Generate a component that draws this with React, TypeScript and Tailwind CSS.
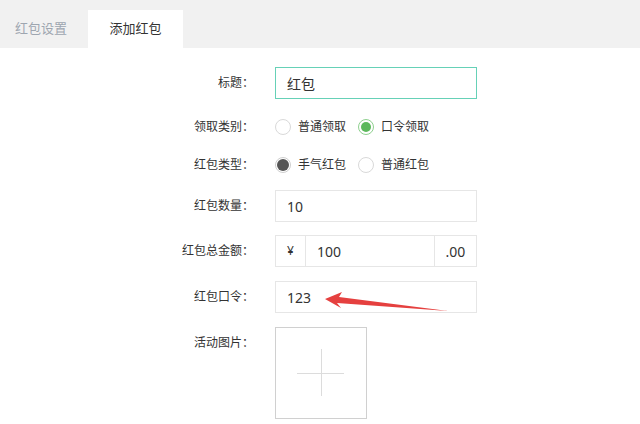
import React from "react";

const font = { fontFamily: '"Noto Sans", "Noto Sans CJK SC", sans-serif' };

function Label({ children }: { children: React.ReactNode }) {
  return (
    <div className="w-[254px] shrink-0 text-right text-[12px] text-[#333] leading-[32px]">
      {children}
    </div>
  );
}

function Radio({ state }: { state: "off" | "green" | "dark" }) {
  if (state === "green") {
    return (
      <span className="w-4 h-4 rounded-full border border-[#8fd08f] bg-white flex items-center justify-center">
        <span className="w-[10px] h-[10px] rounded-full bg-[#5cb85c]" />
      </span>
    );
  }
  if (state === "dark") {
    return (
      <span className="w-4 h-4 rounded-full border border-[#cfcfcf] bg-white flex items-center justify-center">
        <span className="w-[12px] h-[12px] rounded-full bg-[#555]" />
      </span>
    );
  }
  return <span className="w-4 h-4 rounded-full border border-[#d9d9d9] bg-white" />;
}

function RadioItem({ state, text }: { state: "off" | "green" | "dark"; text: string }) {
  return (
    <div className="flex items-center">
      <Radio state={state} />
      <span className="ml-[7px] text-[12px] text-[#333]">{text}</span>
    </div>
  );
}

export default function App() {
  return (
    <div className="w-[640px] h-[424px] bg-white overflow-hidden" style={font}>
      <div className="h-[48px] bg-[#f1f1f1] flex items-end">
        <div className="w-[88px] h-[38px] flex items-center pl-[15px] text-[13px] text-[#9ea6b0]">
          红包设置
        </div>
        <div className="w-[95px] h-[38px] bg-white flex items-center justify-center text-[13px] text-[#333]">
          添加红包
        </div>
      </div>

      <div className="flex flex-col">
        <div className="flex items-center mt-[19px] h-[32px]">
          <Label>标题：</Label>
          <div className="ml-[21px] w-[202px] h-[32px] border border-[#66d1b7] flex items-center pl-[11px] text-[14px] text-[#333]">
            红包
          </div>
        </div>

        <div className="flex items-center mt-[12px] h-[32px]">
          <Label>领取类别：</Label>
          <div className="ml-[21px] flex items-center gap-[12px]">
            <RadioItem state="off" text="普通领取" />
            <RadioItem state="green" text="口令领取" />
          </div>
        </div>

        <div className="flex items-center mt-[6px] h-[32px]">
          <Label>红包类型：</Label>
          <div className="ml-[21px] flex items-center gap-[12px]">
            <RadioItem state="dark" text="手气红包" />
            <RadioItem state="off" text="普通红包" />
          </div>
        </div>

        <div className="flex items-center mt-[9px] h-[32px]">
          <Label>红包数量：</Label>
          <div className="ml-[21px] w-[202px] h-[32px] border border-[#e6e6e6] flex items-center pl-[11px] text-[14px] text-[#333]">
            10
          </div>
        </div>

        <div className="flex items-center mt-[13px] h-[32px]">
          <Label>红包总金额：</Label>
          <div className="ml-[21px] w-[202px] h-[32px] border border-[#e6e6e6] flex text-[#333]">
            <div className="w-[30px] flex items-center justify-center text-[12px] border-r border-[#e6e6e6]">¥</div>
            <div className="flex-1 flex items-center pl-[11px] text-[14px]">100</div>
            <div className="w-[42px] flex items-center justify-center text-[14px] border-l border-[#e6e6e6]">.00</div>
          </div>
        </div>

        <div className="flex items-center mt-[14px] h-[32px]">
          <Label>红包口令：</Label>
          <div className="relative ml-[21px] w-[202px] h-[32px] border border-[#e6e6e6] flex items-center pl-[11px] text-[14px] text-[#333]">
            123
            <svg className="absolute left-0 top-0" width="202" height="32" viewBox="275 281 202 32">
              <polygon
                points="324,298 341,291 338,296 447,310 336,302 340,307"
                fill="#e5403f"
              />
            </svg>
          </div>
        </div>

        <div className="flex items-start mt-[14px]">
          <Label>活动图片：</Label>
          <div className="relative ml-[21px] w-[92px] h-[92px] border border-[#d0d0d0]">
            <div className="absolute left-[21px] top-[45px] w-[47px] h-[1px] bg-[#dcdcdc]" />
            <div className="absolute left-[45px] top-[21px] w-[1px] h-[47px] bg-[#dcdcdc]" />
          </div>
        </div>
      </div>
    </div>
  );
}
